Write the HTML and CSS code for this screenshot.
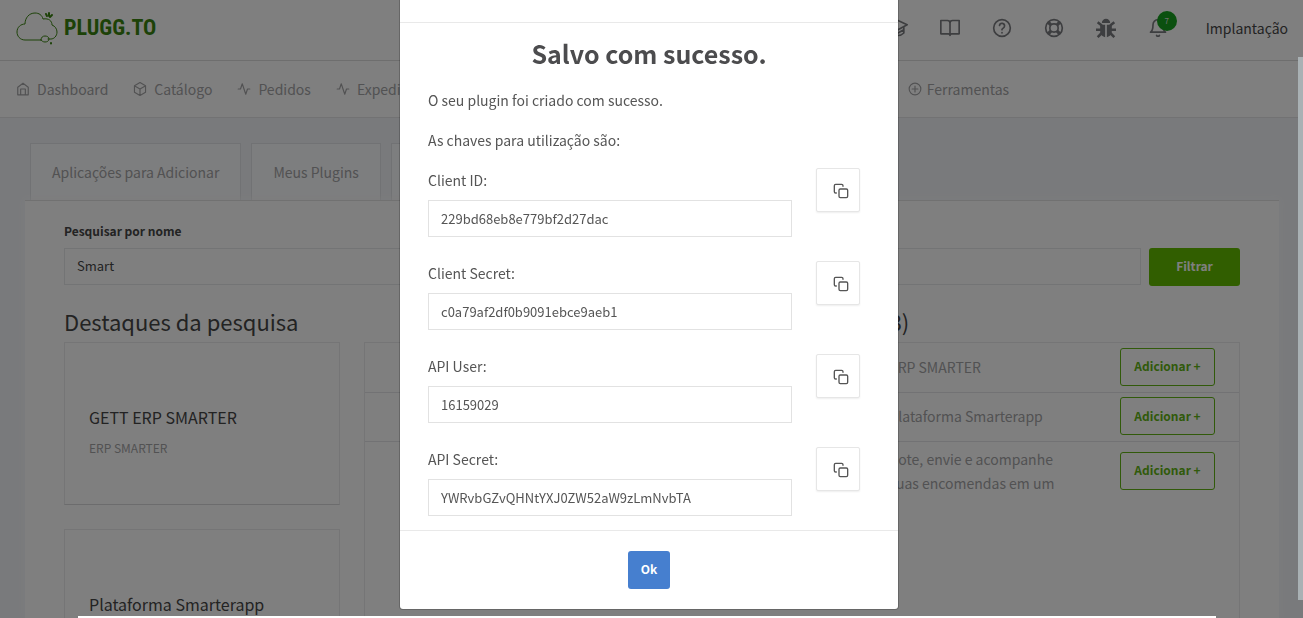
FILE: index.html
```html
<!DOCTYPE html>
<html lang="pt-BR">
<head>
    <meta charset="UTF-8">
    <meta name="viewport" content="width=device-width, initial-scale=1.0">
    <title>Plugg.to - Meus Plugins</title>
    <link rel="stylesheet" href="styles.css">
</head>
<body>
    <svg class="sprite" aria-hidden="true">
        <symbol id="i-copy" viewBox="0 0 24 24"><rect x="9" y="9" width="13" height="13" rx="2"/><path d="M5 15H4a2 2 0 0 1-2-2V4a2 2 0 0 1 2-2h9a2 2 0 0 1 2 2v1"/></symbol>
        <symbol id="i-pulse" viewBox="0 0 24 24"><path d="M22 12h-4l-3 9L9 3l-3 9H2"/></symbol>
    </svg>

    <div class="page">
        <header class="topbar">
            <a class="logo" href="#">
                <svg class="cloud" viewBox="0 0 42 34">
                    <path d="M25 29H9C4 29 1 25 1 21c0-5 4-8 8-8 0-6 4-11 10-11 4 0 7 2 8 6 6-1 9 2 9 6 3 1 5 4 5 7 0 4-3 7-6 7h-3"/>
                    <path d="M25 29c0-3 2-4 4-4s4 1 4 3-2 3-4 3-3-1-4-2z"/>
                    <path class="dots" d="M30 3l1 2M33 2v3M36 4l-2 2M35 32v.5"/>
                </svg>
                <span>PLUGG.TO</span>
            </a>
            <div class="tools">
                <a href="#" aria-label="Academia"><svg viewBox="0 0 24 24"><path d="M1 8l11-5 11 5-11 6zM5 11v7c4 4 10 4 14 0v-7M19 14l-7 4-7-4"/></svg></a>
                <a href="#" aria-label="Manual"><svg viewBox="0 0 24 24"><path d="M1 3h8a3 3 0 0 1 3 3v15a2 2 0 0 0-2-2H1zM23 3h-8a3 3 0 0 0-3 3v15a2 2 0 0 1 2-2h9z"/></svg></a>
                <a href="#" aria-label="Ajuda"><svg viewBox="0 0 24 24"><circle cx="12" cy="12" r="10"/><path d="M9 9a3 3 0 0 1 6 1c0 2-3 3-3 3.500V14M12 17.500v.5"/></svg></a>
                <a href="#" aria-label="Suporte"><svg viewBox="0 0 24 24"><circle cx="12" cy="12" r="10"/><circle cx="12" cy="12" r="5"/><path class="thick" d="M5 5l3.500 3.500M15.500 15.500L19 19M19 5l-3.500 3.500M8.500 15.500L5 19"/></svg></a>
                <a href="#" aria-label="Bugs"><svg class="bug" viewBox="0 0 24 24"><path class="fill" d="M7 6a5 5 0 0 1 10 0zM5 8h6v15c-4-1-6-3-6-8zM19 8h-6v15c4-1 6-3 6-8z"/><path d="M7 9L2 5M6 14H0M7 18l-5 5M17 9l5-4M18 14h6M17 18l5 5"/></svg></a>
                <a class="bell" href="#" aria-label="Notificações"><svg viewBox="0 0 24 24"><path d="M18 8A6 6 0 0 0 6 8c0 7-3 9-3 9h18s-3-2-3-9M13.700 21a2 2 0 0 1-3.400 0"/></svg><span class="badge">7</span></a>
            </div>
            <a class="user" href="#">Implantação</a>
        </header>

        <nav class="menu">
            <div class="menu-group">
                <a href="#"><svg viewBox="0 0 24 24"><path d="M3 9l9-7 9 7v13H3zM8 22V12h8v10"/></svg>Dashboard</a>
                <a href="#"><svg viewBox="0 0 24 24"><path d="M12 1l9.500 5.500v11L12 23l-9.500-5.500v-11zM3 7l9 5 9-5M12 23V12"/></svg>Catálogo</a>
                <a href="#"><svg><use href="#i-pulse"/></svg>Pedidos</a>
                <a href="#"><svg><use href="#i-pulse"/></svg>Expedição</a>
            </div>
            <div class="menu-group tight">
                <a href="#"><svg viewBox="0 0 24 24"><circle cx="12" cy="12" r="10"/><path d="M12 7v10M7 12h10"/></svg>Ferramentas</a>
            </div>
        </nav>

        <main>
            <div class="tabs">
                <a href="#">Aplicações para Adicionar</a>
                <a href="#">Meus Plugins</a>
                <a href="#" aria-label="Novo Plugin"></a>
            </div>
            <section class="panel">
                <label class="search-label" for="name">Pesquisar por nome</label>
                <form class="search">
                    <input type="text" id="name" value="Smart">
                    <button type="button">Filtrar</button>
                </form>
                <div class="results">
                    <div>
                        <h2>Destaques da pesquisa</h2>
                        <article class="card">
                            <h3>GETT ERP SMARTER</h3>
                            <p>ERP SMARTER</p>
                        </article>
                        <article class="card">
                            <h3>Plataforma Smarterapp</h3>
                        </article>
                    </div>
                    <div class="list">
                        <h2>Outros resultados (3)</h2>
                        <div class="list-box">
                            <table>
                                <tr>
                                    <td class="name"></td>
                                    <td>ERP SMARTER</td>
                                    <td class="action"><button type="button">Adicionar +</button></td>
                                </tr>
                                <tr>
                                    <td class="name"></td>
                                    <td>Plataforma Smarterapp</td>
                                    <td class="action"><button type="button">Adicionar +</button></td>
                                </tr>
                                <tr>
                                    <td class="name"></td>
                                    <td>Cote, envie e acompanhe<br>suas encomendas em um</td>
                                    <td class="action"><button type="button">Adicionar +</button></td>
                                </tr>
                            </table>
                        </div>
                    </div>
                </div>
            </section>
        </main>
    </div>

    <div class="overlay">
        <div class="modal" role="dialog" aria-labelledby="modal-title">
            <div class="modal-header"></div>
            <div class="modal-body">
                <h1 id="modal-title">Salvo com sucesso.</h1>
                <p>O seu plugin foi criado com sucesso.</p>
                <p>As chaves para utilização são:</p>
                <div class="field">
                    <label for="client-id">Client ID:</label>
                    <input type="text" id="client-id" value="229bd68eb8e779bf2d27dac">
                    <button type="button" aria-label="Copiar Client ID"><svg><use href="#i-copy"/></svg></button>
                </div>
                <div class="field">
                    <label for="client-secret">Client Secret:</label>
                    <input type="text" id="client-secret" value="c0a79af2df0b9091ebce9aeb1">
                    <button type="button" aria-label="Copiar Client Secret"><svg><use href="#i-copy"/></svg></button>
                </div>
                <div class="field">
                    <label for="api-user">API User:</label>
                    <input type="text" id="api-user" value="16159029">
                    <button type="button" aria-label="Copiar API User"><svg><use href="#i-copy"/></svg></button>
                </div>
                <div class="field">
                    <label for="api-secret">API Secret:</label>
                    <input type="text" id="api-secret" value="YWRvbGZvQHNtYXJ0ZW52aW9zLmNvbTA">
                    <button type="button" aria-label="Copiar API Secret"><svg><use href="#i-copy"/></svg></button>
                </div>
            </div>
            <div class="modal-footer">
                <button type="button">Ok</button>
            </div>
        </div>
    </div>
    <div class="scroll-thumb"></div>
    <div class="bottom-strip"></div>
</body>
</html>
```
FILE: styles.css
```css
* {
    box-sizing: border-box;
}
body {
    margin: 0;
    height: 100vh;
    overflow: hidden;
    background: #f3f5f9;
    color: #464646;
    font-family: "Noto Sans CJK SC", "Noto Sans", sans-serif;
    font-size: 14px;
    line-height: 24px;
}
a {
    color: inherit;
    text-decoration: none;
}
h1, h2, h3, p {
    margin: 0;
    font-weight: normal;
}
input, button {
    font-family: inherit;
    font-size: 13px;
    color: inherit;
}
svg {
    display: block;
    fill: none;
    stroke: currentColor;
    stroke-width: 2;
    stroke-linecap: round;
    stroke-linejoin: round;
}
.sprite {
    position: absolute;
    width: 0;
    height: 0;
}
.page {
    display: flex;
    flex-direction: column;
    height: 100%;
    padding-right: 5px;
    background: linear-gradient(to bottom, #fff 118px, transparent 118px);
}

/* top bar */
.topbar {
    display: flex;
    align-items: center;
    height: 61px;
    flex: none;
    padding: 0 10px 4px 16px;
    border-bottom: 1px solid #dcdcdc;
}
.logo {
    display: flex;
    align-items: center;
    gap: 6px;
    color: #3a8510;
    font: bold 22px/30px "Liberation Sans Narrow", "Roboto Condensed", "Liberation Sans", sans-serif;
}
.cloud {
    width: 42px;
    height: 34px;
    stroke-width: 1;
}
.cloud .dots {
    stroke-width: 2;
}
.tools {
    display: flex;
    gap: 32px;
    margin: 0 38px 0 auto;
    color: #7b7c80;
}
.tools svg {
    width: 20px;
    height: 20px;
}
.tools .thick {
    stroke-width: 4;
    stroke-linecap: butt;
}
.tools .fill {
    fill: currentColor;
    stroke: none;
}
.tools .bug {
    stroke-width: 3;
    stroke-linecap: butt;
}
.bell {
    position: relative;
}
.badge {
    position: absolute;
    left: 9px;
    top: -7px;
    width: 20px;
    height: 20px;
    border-radius: 50%;
    background: #16a01f;
    color: #ddd;
    font-size: 8px;
    line-height: 20px;
    text-align: center;
}

/* menu */
.menu {
    display: grid;
    grid-template-columns: 7fr 3fr;
    height: 57px;
    flex: none;
    padding: 0 8px 0 16px;
    border-bottom: 1px solid #e4e4e6;
    color: #a4a4a6;
}
.menu-group {
    display: flex;
    align-items: center;
    gap: 25px;
}
.menu a {
    display: flex;
    align-items: center;
    gap: 7px;
}
.menu .tight a {
    gap: 5px;
}
.menu svg {
    width: 14px;
    height: 14px;
}

/* content */
main {
    flex: 1;
    display: flex;
    flex-direction: column;
    min-height: 0;
    padding: 25px 19px 0 25px;
}
.tabs {
    display: flex;
    gap: 10px;
    margin-left: 5px;
}
.tabs a {
    padding: 16px 21px;
    border: 1px solid #e2e4e8;
    border-bottom: 0;
    background: #fbfcfe;
    color: #a4a4a6;
}
.panel {
    flex: 1;
    display: flex;
    flex-direction: column;
    min-height: 0;
    padding: 18px 39px 0;
    border-top: 1px solid #e2e2e2;
    background: #fff;
    box-shadow: 0 0 8px #f8f9fb;
    overflow: hidden;
}
.search-label {
    font-size: 12px;
    font-weight: bold;
}
.search {
    display: flex;
    gap: 8px;
    margin: 5px 0 18px;
}
.search input {
    flex: 1;
    height: 37px;
    padding: 0 12px 2px;
    border: 1px solid #e6e8eb;
    background: #fff;
}
.search button {
    width: 91px;
    height: 38px;
    padding: 0 0 3px;
    border: 0;
    border-radius: 3px;
    background: #62bd00;
    color: #fff;
    font-size: 12px;
    font-weight: bold;
}
.results {
    flex: 1;
    display: grid;
    grid-template-columns: 276px 1fr;
    gap: 24px;
}
.results h2 {
    height: 38px;
    font-size: 22px;
    line-height: 34px;
}
.card {
    height: 163px;
    margin-bottom: 24px;
    padding: 62px 24px 0;
    border: 1px solid #eaebed;
    border-bottom-color: #d8d8da;
}
.card h3 {
    font-size: 16px;
}
.card p {
    margin-top: 7px;
    font-size: 12px;
    color: #a4a4a6;
}
.list {
    display: flex;
    flex-direction: column;
}
.list h2 {
    text-align: center;
}
.list-box {
    flex: 1;
    border: 1px solid #eaebed;
    border-bottom: 0;
}
table {
    width: 100%;
    table-layout: fixed;
    border-collapse: collapse;
    color: #a4a4a6;
}
td {
    height: 49px;
    padding: 0 0 1px;
    border-bottom: 1px solid #e4e5e8;
}
tr:last-child td {
    height: 60px;
    border-bottom: 0;
}
.name {
    width: 60%;
}
td.action {
    padding-right: 24px;
}
.action button {
    display: block;
    width: 95px;
    height: 38px;
    margin-left: auto;
    padding: 0 0 2px;
    border: 1px solid #62b514;
    border-radius: 3px;
    background: none;
    color: #62b514;
    font-size: 12px;
    font-weight: bold;
}

/* modal */
.overlay {
    position: fixed;
    inset: 0;
    display: flex;
    justify-content: center;
    align-items: flex-start;
    padding-right: 5px;
    background: rgba(0, 0, 0, 0.5);
}
.modal {
    width: 498px;
    max-width: 100%;
    border-radius: 0 0 3px 3px;
    background: #fff;
    color: #555;
    box-shadow: 0 0 0 1px rgba(0, 0, 0, 0.2);
}
.modal-header {
    height: 23px;
    border-bottom: 1px solid #e9e9e9;
}
.modal-body {
    padding: 14px 38px 14px 28px;
}
.modal h1 {
    margin: 0 -10px 19px 0;
    color: #4c4c4e;
    font-size: 25px;
    font-weight: bold;
    line-height: 32px;
    text-align: center;
}
.modal p {
    margin-bottom: 16px;
}
.field {
    display: grid;
    grid-template-columns: 1fr 44px;
    grid-template-rows: 24px 37px;
    gap: 8px 24px;
    margin-bottom: 24px;
}
.field:last-child {
    margin-bottom: 0;
}
.field input {
    grid-row: 2;
    min-width: 0;
    padding: 0 12px 1px;
    border: 1px solid #e2e2e2;
    background: #fff;
}
.field button {
    grid-column: 2;
    grid-row: 1 / 3;
    height: 44px;
    padding: 2px 0 0 16px;
    border: 1px solid #e6e6e6;
    border-radius: 2px;
    background: #fff;
    box-shadow: 0 1px 2px #eee;
}
.field svg {
    width: 16px;
    height: 16px;
}
.modal-footer {
    padding: 20px;
    border-top: 1px solid #e9e9e9;
    text-align: center;
}
.modal-footer button {
    display: inline-block;
    width: 42px;
    height: 38px;
    padding: 0 0 3px;
    border: 0;
    border-radius: 3px;
    background: #467fcf;
    color: #fff;
    font-size: 12px;
    font-weight: bold;
    vertical-align: top;
}

.scroll-thumb {
    position: fixed;
    right: 0;
    top: 57px;
    bottom: 18px;
    width: 5px;
    background: #a9b1b4;
}
.bottom-strip {
    position: fixed;
    left: 78px;
    right: 87px;
    bottom: 0;
    height: 2px;
    background: #fff;
}
```
